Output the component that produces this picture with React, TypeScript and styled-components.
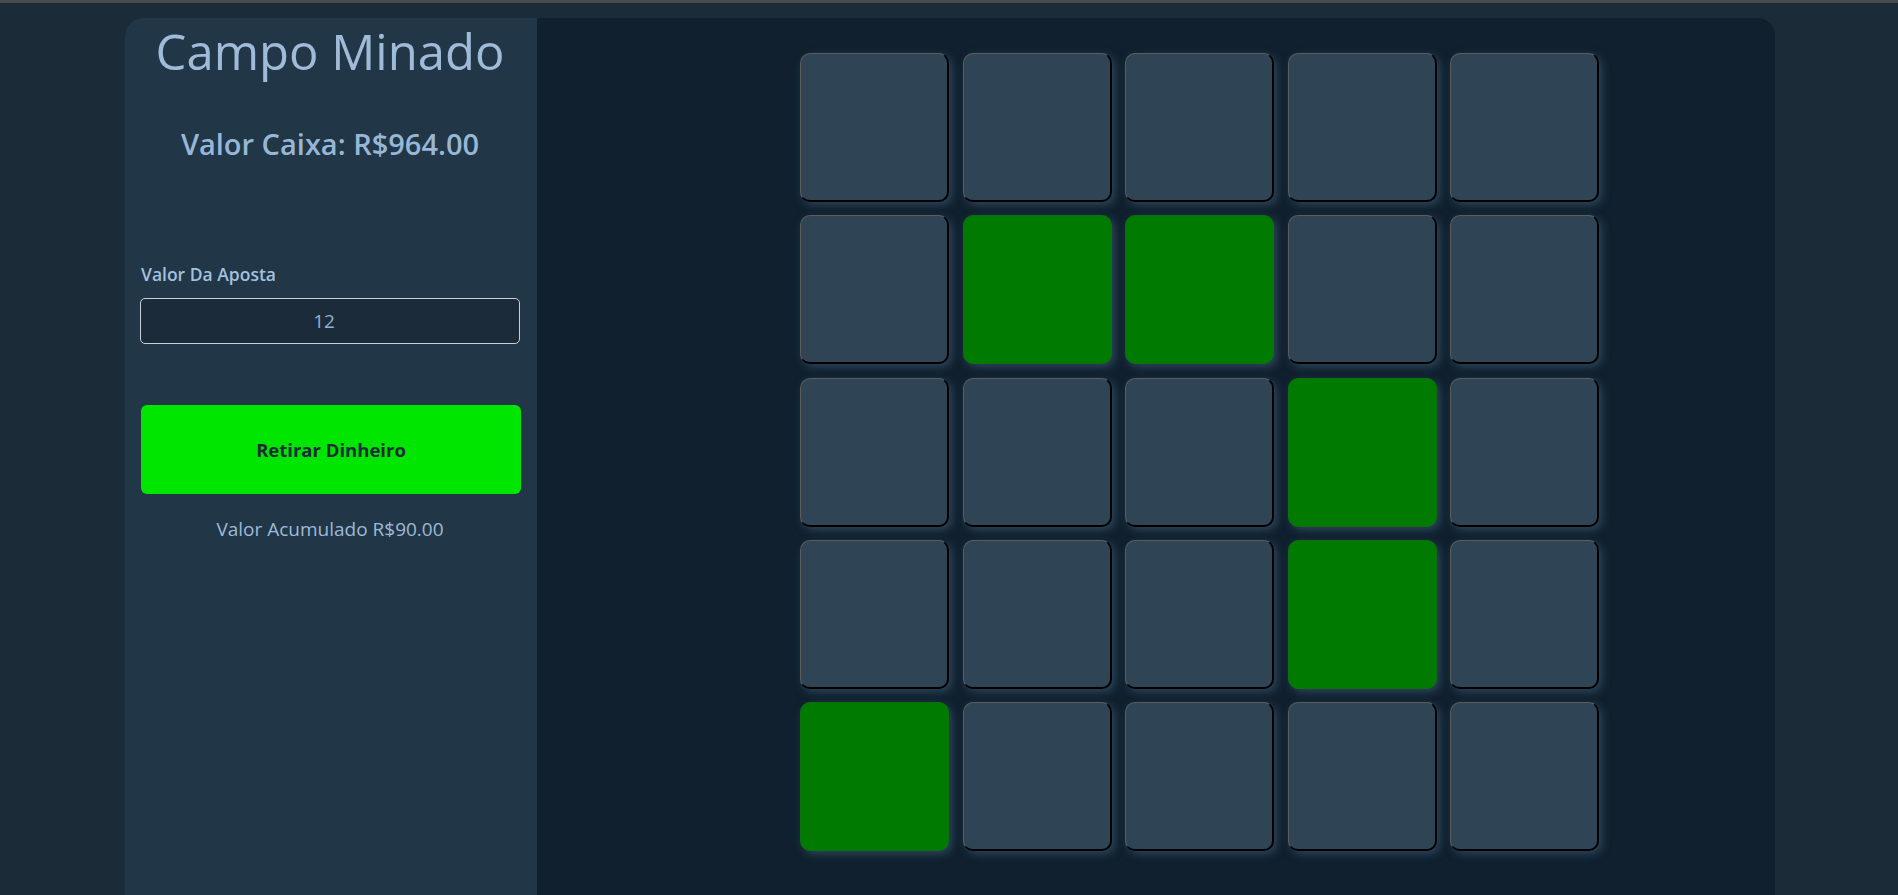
import React from "react";
import styled, { createGlobalStyle } from "styled-components";

const GlobalStyle = createGlobalStyle`
  html, body {
    margin: 0;
    padding: 0;
    background: #1b2b38;
    font-family: "Open Sans", "Noto Sans", "Liberation Sans", sans-serif;
    overflow: hidden;
  }
  * { box-sizing: border-box; }
`;

const TopStrip = styled.div`
  height: 3px;
  background: #4a4a4a;
`;

const Page = styled.div`
  padding: 15px 123px 0 125px;
`;

const Card = styled.div`
  display: flex;
  min-height: 900px;
  background: #10202e;
  border-radius: 18px 18px 0 0;
  overflow: hidden;
`;

const Sidebar = styled.aside`
  width: 412px;
  flex-shrink: 0;
  background: #213646;
  padding: 0 17px 0 15px;
  display: flex;
  flex-direction: column;
  color: #9fbad6;
`;

const Title = styled.h1`
  margin: 0;
  font-size: 49px;
  line-height: 66px;
  font-weight: 500;
  text-align: center;
  color: #a0bbd7;
`;

const Balance = styled.h2`
  margin: 41px 0 0;
  font-size: 29px;
  line-height: 38px;
  font-weight: 600;
  text-align: center;
  color: #98b7d6;
`;

const Label = styled.label`
  margin: 100px 0 0 1px;
  font-size: 17.5px;
  line-height: 22px;
  font-weight: 600;
  color: #a3c0de;
`;

const BetInput = styled.input`
  margin-top: 13px;
  width: 380px;
  height: 46px;
  padding: 0 12px 0 0;
  background: #1c2b39;
  border: 1px solid #c9cfd6;
  border-radius: 5px;
  color: #8fb1d4;
  font-family: inherit;
  font-size: 19px;
  text-align: center;
  outline: none;
`;

const CashOut = styled.button`
  margin-top: 61px;
  width: 380px;
  height: 89px;
  margin-left: 1px;
  background: #00e600;
  border: none;
  border-radius: 6px;
  color: #1d2c3a;
  font-family: inherit;
  font-size: 18.5px;
  font-weight: 700;
  cursor: pointer;
`;

const Accumulated = styled.p`
  margin: 23px 0 0;
  font-size: 19px;
  line-height: 25px;
  text-align: center;
  color: #9dbad8;
`;

const Board = styled.main`
  flex: 1;
  padding: 35px 0 0 263px;
`;

const Grid = styled.div`
  display: grid;
  grid-template-columns: repeat(5, 149px);
  grid-auto-rows: 149px;
  column-gap: 13.5px;
  row-gap: 13.3px;
`;

const Tile = styled.button<{ $revealed: boolean }>`
  padding: 0;
  border-radius: 10px;
  cursor: pointer;
  background: ${(p) => (p.$revealed ? "#007a00" : "#2f4454")};
  border-style: solid;
  border-width: ${(p) => (p.$revealed ? "1px" : "1px 2px 2px 1px")};
  border-color: ${(p) =>
    p.$revealed ? "#0e6f0e" : "#5c5c5c #000 #000 #5c5c5c"};
  box-shadow: 3px 3px 8px rgba(70, 100, 128, 0.55);
`;

const revealed = new Set(["1-1", "1-2", "2-3", "3-3", "4-0"]);

export default function App() {
  const cells = [];
  for (let r = 0; r < 5; r++) {
    for (let c = 0; c < 5; c++) {
      cells.push(
        <Tile key={`${r}-${c}`} $revealed={revealed.has(`${r}-${c}`)} />
      );
    }
  }
  return (
    <>
      <GlobalStyle />
      <TopStrip />
      <Page>
        <Card>
          <Sidebar>
            <Title>Campo Minado</Title>
            <Balance>Valor Caixa: R$964.00</Balance>
            <Label htmlFor="bet">Valor Da Aposta</Label>
            <BetInput id="bet" defaultValue="12" />
            <CashOut>Retirar Dinheiro</CashOut>
            <Accumulated>Valor Acumulado R$90.00</Accumulated>
          </Sidebar>
          <Board>
            <Grid>{cells}</Grid>
          </Board>
        </Card>
      </Page>
    </>
  );
}
